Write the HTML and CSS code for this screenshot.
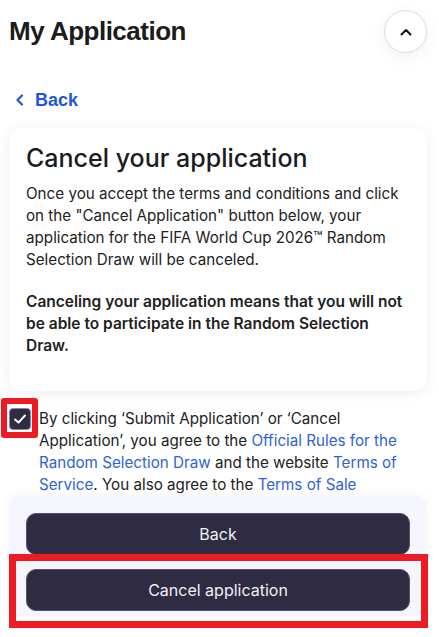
FILE: index.html
```html
<!DOCTYPE html>
<html lang="en">
<head>
    <meta charset="UTF-8">
    <meta name="viewport" content="width=device-width, initial-scale=1.0">
    <title>My Application</title>
    <link rel="stylesheet" href="styles.css">
</head>
<body>

    <div class="page">
        <div class="header">
            <h1>My Application</h1>
            <button class="collapse-btn" aria-label="Collapse">
                <svg width="12" height="8" viewBox="0 0 12 8"><path d="M1.5 6.5 L6 2 L10.5 6.5" fill="none" stroke="#111" stroke-width="2" stroke-linecap="round" stroke-linejoin="round"/></svg>
            </button>
        </div>

        <a class="back-link" href="#">
            <svg width="10" height="12" viewBox="0 0 10 12"><path d="M7 1.5 L2.5 6 L7 10.5" fill="none" stroke="currentColor" stroke-width="2.2" stroke-linecap="round" stroke-linejoin="round"/></svg>
            <span>Back</span>
        </a>

        <div class="card">
            <h2>Cancel your application</h2>
            <p>Once you accept the terms and conditions and click on the "Cancel Application" button below, your application for the FIFA World Cup 2026™ Random Selection Draw will be canceled.</p>
            <p class="strong">Canceling your application means that you will not be able to participate in the Random Selection Draw.</p>
        </div>

        <div class="terms">
            <span class="checkbox">
                <svg width="14" height="12" viewBox="0 0 14 12"><path d="M2 6.5 L5.5 9.5 L12 2.5" fill="none" stroke="#fff" stroke-width="2" stroke-linecap="round" stroke-linejoin="round"/></svg>
            </span>
            <p>By clicking ‘Submit Application’ or ‘Cancel Application’, you agree to the <a href="#">Official Rules for the Random Selection Draw</a> and the website <a href="#">Terms of Service</a>. You also agree to the <a href="#">Terms of Sale</a></p>
        </div>

        <div class="actions">
            <button class="btn">Back</button>
            <button class="btn">Cancel application</button>
        </div>
    </div>

    <!-- review markers -->
    <div class="mark mark-check"></div>
    <div class="mark mark-cancel"></div>

</body>
</html>
```

FILE: styles.css
```css
body {
    margin: 0;
    background: white;
    font-family: "Inter", "Liberation Sans", sans-serif;
    color: #222;
    overflow: hidden;
    height: 637px;
}
.page {
    padding: 0 12px 0 9px;
}
.header {
    display: flex;
    justify-content: space-between;
    align-items: center;
    padding-top: 10px;
}
h1 {
    margin: 0;
    font-family: "Liberation Sans", sans-serif;
    font-size: 26px;
    font-weight: bold;
    letter-spacing: -0.5px;
    color: #1c1c1c;
}
.collapse-btn {
    width: 43px;
    height: 43px;
    border-radius: 50%;
    border: 1px solid #dcdcdc;
    background: white;
    box-shadow: 0 4px 18px rgba(0, 0, 0, 0.06);
    display: flex;
    align-items: center;
    justify-content: center;
    padding: 0;
}
.back-link {
    display: flex;
    align-items: center;
    gap: 10px;
    margin: 36px 0 0 6px;
    color: #2356d3;
    text-decoration: none;
    font-family: "Liberation Sans", sans-serif;
    font-weight: bold;
    font-size: 18px;
    line-height: 22px;
}
.card {
    margin-top: 17px;
    background: white;
    border-radius: 12px;
    box-shadow: 0 2px 14px rgba(0, 0, 0, 0.07);
    padding: 14px 17px 34px 17px;
}
h2 {
    margin: 0 0 9px 0;
    font-size: 25px;
    font-weight: 500;
    line-height: 32px;
    color: #1c1c1c;
}
.card p {
    margin: 0;
    font-size: 15.2px;
    line-height: 22px;
}
.card p + p {
    margin-top: 20px;
}
.card .strong {
    font-weight: 600;
    font-size: 15.5px;
}
.terms {
    display: flex;
    align-items: flex-start;
    gap: 8px;
    margin-top: 17px;
}
.checkbox {
    flex: none;
    width: 22px;
    height: 22px;
    box-sizing: border-box;
    border-radius: 4px;
    background: #2e2b43;
    border: 1px solid #8a889a;
    display: flex;
    align-items: center;
    justify-content: center;
}
.terms p {
    margin: 0;
    font-size: 15.2px;
    line-height: 22px;
    padding-right: 20px;
}
.terms a {
    color: #2f62d8;
    text-decoration: none;
}
.actions {
    margin-top: 0;
    background: #f5f5fe;
    border-radius: 12px 12px 0 0;
    box-shadow: 0 -2px 12px rgba(0, 0, 0, 0.04);
    padding: 17px 17px 5px 17px;
    display: flex;
    flex-direction: column;
    gap: 14px;
}
.btn {
    height: 42px;
    border: 1px solid #55536a;
    border-radius: 10px;
    background: #2e2b43;
    color: #f0f0f4;
    font-family: "Inter", sans-serif;
    font-size: 16px;
}
.mark {
    position: absolute;
    border: 6px solid #ed1c24;
    box-sizing: border-box;
    border-radius: 3px;
}
.mark-check {
    left: 1px;
    top: 398px;
    width: 37px;
    height: 40px;
}
.mark-cancel {
    left: 9px;
    top: 554px;
    width: 419px;
    height: 74px;
    border-width: 7px;
    border-radius: 0;
}
```
